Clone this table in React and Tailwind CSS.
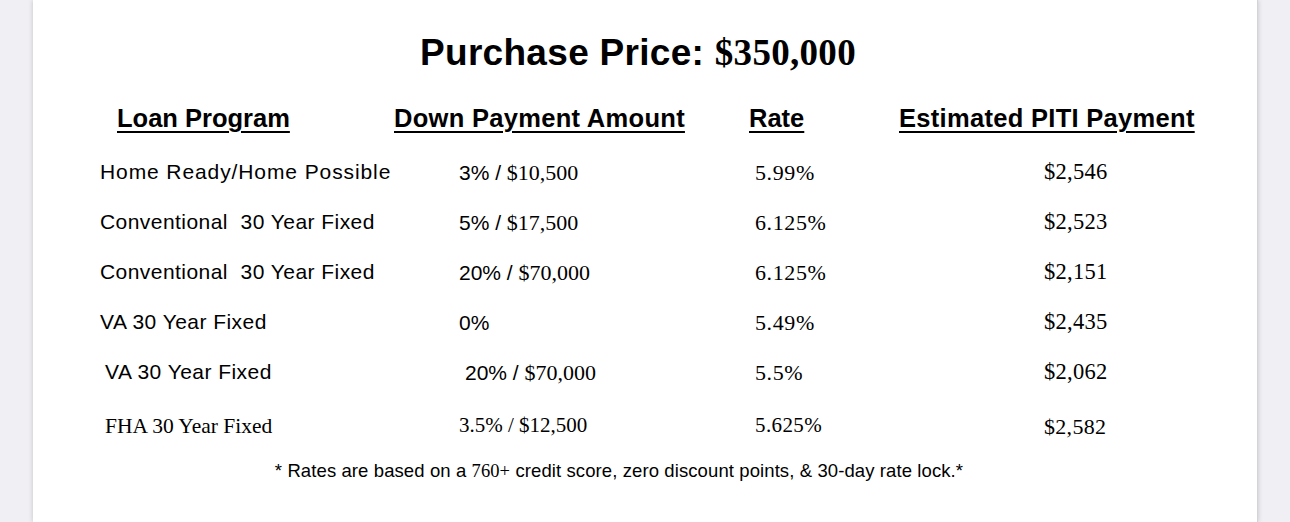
import React from 'react';

const rows = [
    { program: 'Home Ready/Home Possible', pct: '3% / ', amount: '$10,500', rate: '5.99%', piti: '$2,546', wide: true },
    { program: 'Conventional  30 Year Fixed', pct: '5% / ', amount: '$17,500', rate: '6.125%', piti: '$2,523' },
    { program: 'Conventional  30 Year Fixed', pct: '20% / ', amount: '$70,000', rate: '6.125%', piti: '$2,151' },
    { program: 'VA 30 Year Fixed', pct: '0%', amount: '', rate: '5.49%', piti: '$2,435' },
    { program: 'VA 30 Year Fixed', pct: '20% / ', amount: '$70,000', rate: '5.5%', piti: '$2,062', shift: true },
];

const LoanTable = () => {
    return (
        <div className="h-[522px] w-full bg-[#efeff4] overflow-hidden font-['Liberation_Sans',Arial,sans-serif]">
            <div className="ml-[33px] w-[1225px] h-full bg-white shadow-[0_0_5px_rgba(0,0,0,0.18)] border-r border-[#d4d4d8] text-black">
                {/* titulo */}
                <h1 className="pt-[31px] pr-[14px] h-[90px] text-center font-bold text-[37px] leading-[44px] tracking-[0.3px]">
                    <span>Purchase Price: </span>
                    <span className="font-['Liberation_Serif','Times_New_Roman',serif]">$350,000</span>
                </h1>

                {/* encabezados */}
                <div className="grid grid-cols-[277px_355px_150px_1fr] pl-[84px] h-[56px] items-center font-bold text-[25.5px] underline underline-offset-[4px] decoration-2">
                    <span>Loan Program</span>
                    <span className="tracking-[0.3px]">Down Payment Amount</span>
                    <span>Rate</span>
                    <span className="tracking-[0.3px]">Estimated PITI Payment</span>
                </div>

                {/* filas */}
                <div className="pl-[67px] pt-[1px]">
                    {rows.map((r, i) => (
                        <div key={i} className="grid grid-cols-[359px_296px_289px_1fr] h-[50px] items-center text-[21px]">
                            <span className={`whitespace-pre ${r.wide ? 'tracking-[0.9px]' : 'tracking-[0.45px]'} ${r.shift ? 'pl-[5px]' : ''}`}>
                                {r.program}
                            </span>
                            <span className={r.shift ? 'pl-[6px]' : ''}>
                                <span className="whitespace-pre">{r.pct}</span>
                                <span className="font-['Liberation_Serif','Times_New_Roman',serif] text-[22px]">{r.amount}</span>
                            </span>
                            <span className="font-['Liberation_Serif','Times_New_Roman',serif] text-[22px] tracking-[0.6px]">{r.rate}</span>
                            <span className="font-['Liberation_Serif','Times_New_Roman',serif] text-[22.5px] tracking-[0.3px]">{r.piti}</span>
                        </div>
                    ))}
                    <div className="grid grid-cols-[359px_296px_289px_1fr] h-[54px] items-center pt-[4px] text-[21px] font-['Liberation_Serif','Times_New_Roman',serif]">
                        <span className="pl-[5px] text-[21.5px]">FHA 30 Year Fixed</span>
                        <span>3.5% / $12,500</span>
                        <span className="tracking-[0.4px]">5.625%</span>
                        <span className="text-[22px] tracking-[0.3px]">$2,582</span>
                    </div>
                </div>

                {/* nota */}
                <p className="mt-[6px] text-center text-[18.5px] tracking-[0.1px] pr-[52px]">
                    * Rates are based on a <span className="font-['Liberation_Serif','Times_New_Roman',serif]">760+</span> credit score, zero discount points, &amp; 30-day rate lock.*
                </p>
            </div>
        </div>
    );
};

export default LoanTable;
